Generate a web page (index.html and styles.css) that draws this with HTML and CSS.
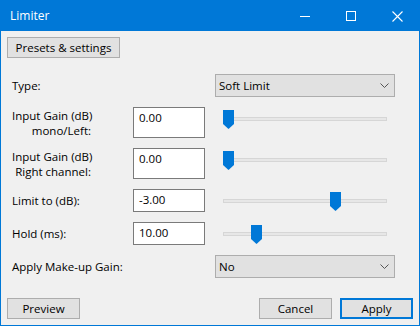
FILE: index.html
```html
<!DOCTYPE html>
<html lang="en">
<head>
<meta charset="utf-8">
<title>Limiter</title>
<link rel="stylesheet" href="styles.css">
</head>
<body>
<div class="window">
  <div class="titlebar">
    <span class="title">Limiter</span>
    <div class="caption-buttons">
      <span class="cap-btn"><svg width="10" height="10" viewBox="0 0 10 10"><path d="M0 5.5H10" stroke="#fff" stroke-width="1"/></svg></span>
      <span class="cap-btn"><svg width="10" height="10" viewBox="0 0 10 10"><rect x="0.5" y="0.5" width="9" height="9" fill="none" stroke="#fff" stroke-width="1"/></svg></span>
      <span class="cap-btn"><svg width="11" height="11" viewBox="0 0 11 11"><path d="M0.5 0.5L10.5 10.5M10.5 0.5L0.5 10.5" stroke="#fff" stroke-width="1.1"/></svg></span>
    </div>
  </div>
  <div class="content">
    <div class="top-bar">
      <button class="btn presets">Presets &amp; settings</button>
    </div>
    <div class="form">
      <label class="lbl">Type:</label>
      <span></span>
      <div class="select"><span>Soft Limit</span><svg class="chev" width="9" height="5" viewBox="0 0 9 5"><path d="M0.5 0.5L4.5 4.5L8.5 0.5" fill="none" stroke="#555" stroke-width="1"/></svg></div>

      <label class="lbl multi">Input Gain (dB)<br>mono/Left:</label>
      <div class="field tall">0.00</div>
      <div class="slider"><div class="track"></div><svg class="thumb" style="left:0px" width="11" height="19" viewBox="0 0 11 19"><path d="M0 0H11V14L5.5 19L0 14Z" fill="#0078d7"/></svg></div>

      <label class="lbl multi">Input Gain (dB)<br>Right channel:</label>
      <div class="field tall">0.00</div>
      <div class="slider"><div class="track"></div><svg class="thumb" style="left:0px" width="11" height="19" viewBox="0 0 11 19"><path d="M0 0H11V14L5.5 19L0 14Z" fill="#0078d7"/></svg></div>

      <label class="lbl">Limit to (dB):</label>
      <div class="field">-3.00</div>
      <div class="slider"><div class="track"></div><svg class="thumb" style="left:107px" width="11" height="19" viewBox="0 0 11 19"><path d="M0 0H11V14L5.5 19L0 14Z" fill="#0078d7"/></svg></div>

      <label class="lbl">Hold (ms):</label>
      <div class="field">10.00</div>
      <div class="slider"><div class="track"></div><svg class="thumb" style="left:28px" width="11" height="19" viewBox="0 0 11 19"><path d="M0 0H11V14L5.5 19L0 14Z" fill="#0078d7"/></svg></div>

      <label class="lbl">Apply Make-up Gain:</label>
      <span></span>
      <div class="select"><span>No</span><svg class="chev" width="9" height="5" viewBox="0 0 9 5"><path d="M0.5 0.5L4.5 4.5L8.5 0.5" fill="none" stroke="#555" stroke-width="1"/></svg></div>
    </div>
    <div class="footer">
      <button class="btn">Preview</button>
      <div class="spacer"></div>
      <button class="btn">Cancel</button>
      <button class="btn default">Apply</button>
    </div>
  </div>
</div>
</body>
</html>
```

FILE: styles.css
```css
* { box-sizing: border-box; }
html, body { margin: 0; padding: 0; background: #f0f0f0; }
body {
  font-family: "Open Sans", "Noto Sans", sans-serif;
  font-size: 11.5px;
  color: #000;
}
.window {
  width: 420px;
  height: 326px;
  border: 1px solid #0078d7;
  background: #f0f0f0;
  display: flex;
  flex-direction: column;
}
.titlebar {
  height: 30px;
  background: #0078d7;
  display: flex;
  align-items: center;
  color: #fff;
}
.title {
  margin-left: 9px;
  font-size: 12px;
  margin-top: -1px;
}
.caption-buttons {
  margin-left: auto;
  margin-right: -1px;
  display: flex;
}
.cap-btn {
  width: 46px;
  height: 30px;
  display: flex;
  align-items: center;
  justify-content: center;
}
.content {
  padding: 6px 6px 0 6px;
  display: flex;
  flex-direction: column;
}
.top-bar { display: flex; }
.btn {
  font: inherit;
  color: #000;
  height: 21px;
  width: 73px;
  background: #e1e1e1;
  border: 1px solid #adadad;
  padding: 0;
  line-height: 19px;
}
.btn.presets { width: 113px; }
.btn.default { border: 2px solid #0078d7; line-height: 17px; }
.form {
  margin-top: 16px;
  margin-left: 5px;
  display: grid;
  grid-template-columns: 111px 72px 180px;
  grid-template-rows: 23px 31px 31px 23px 23px 23px;
  column-gap: 10px;
  row-gap: 10px;
}
.lbl {
  align-self: center;
  white-space: nowrap;
  line-height: 15px;
}
.lbl.multi {
  justify-self: start;
  text-align: right;
  width: 79px;
}
.field {
  background: #fff;
  border: 1px solid #7a7a7a;
  padding: 2px 4px 0 5px;
  line-height: 16px;
}
.select {
  background: #e1e1e1;
  border: 1px solid #adadad;
  display: flex;
  align-items: center;
  padding: 0 0 0 3px;
}
.select .chev {
  margin-left: auto;
  margin-right: 5px;
}
.slider {
  position: relative;
  align-self: start;
  margin: 3px 0 0 8px;
  width: 164px;
  height: 19px;
}
.track {
  margin-top: 7px;
  height: 4px;
  background: #e7e7e7;
  border: 1px solid #d6d6d6;
}
.thumb {
  position: absolute;
  top: 0;
  display: block;
}
.footer {
  margin-top: 20px;
  display: flex;
  gap: 8px;
}
.spacer { flex: 1; }
```
